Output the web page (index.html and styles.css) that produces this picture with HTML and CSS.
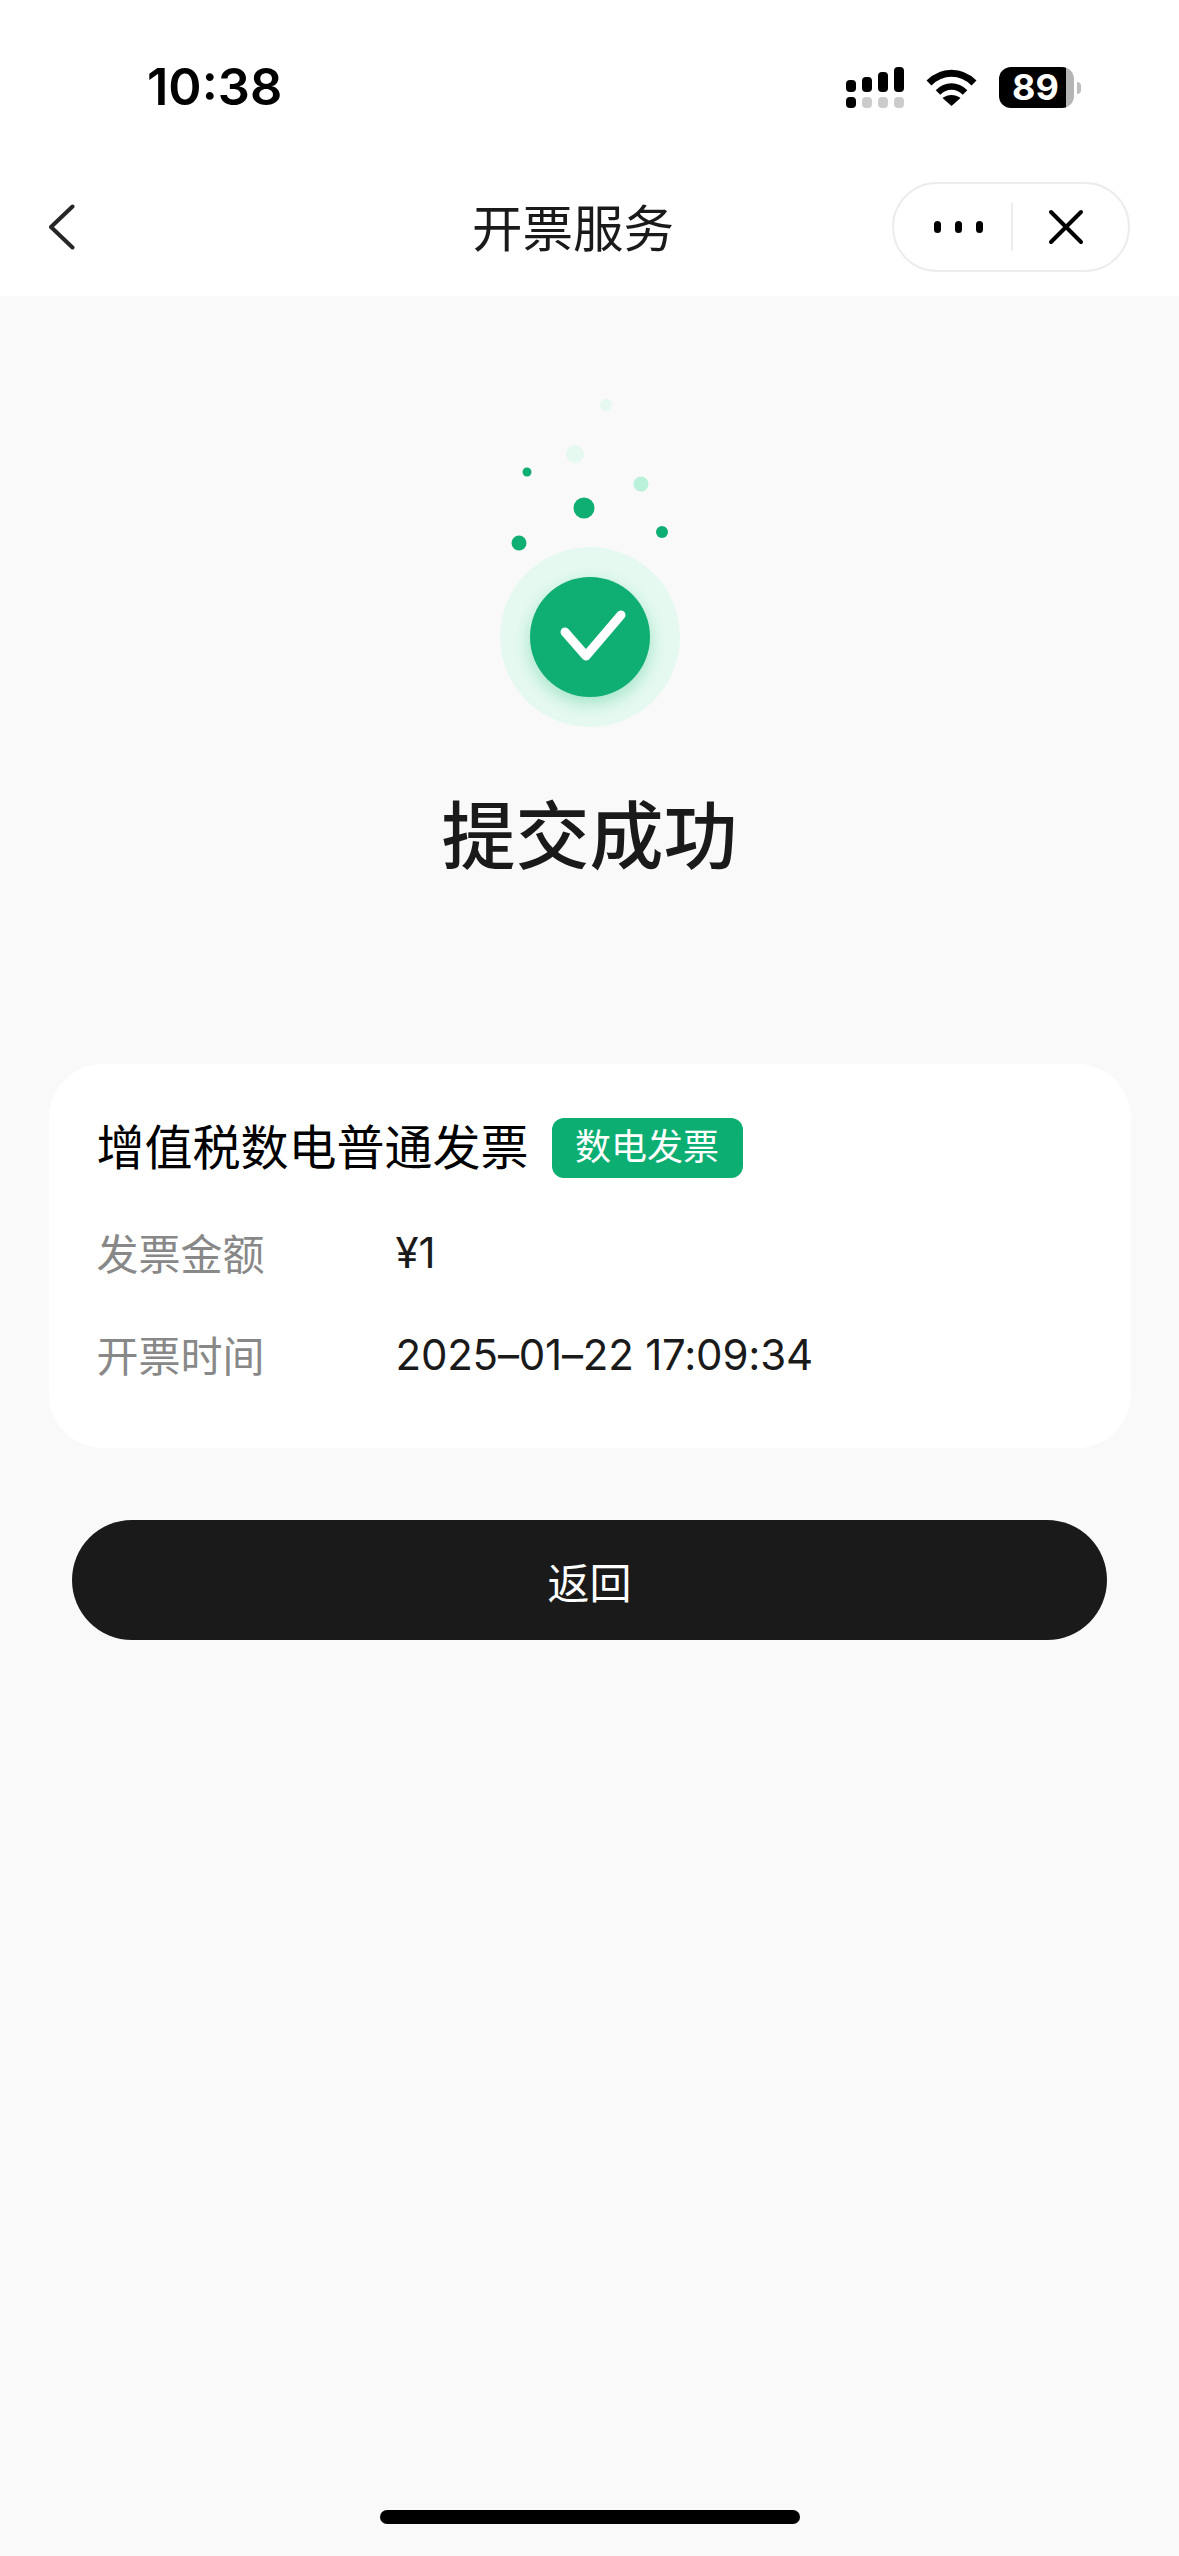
FILE: index.html
```html
<!DOCTYPE html>
<html lang="zh-CN">
<head>
    <meta charset="UTF-8">
    <meta name="viewport" content="width=device-width, initial-scale=1.0">
    <title>开票服务</title>
    <link rel="stylesheet" href="styles.css">
</head>
<body>
    <header class="top">
        <div class="status">
            <span class="time">10:38</span>
            <div class="status_icons">
                <svg class="signal" width="58" height="42" viewBox="0 0 58 42">
                    <rect x="0" y="13" width="10" height="12" rx="4"/>
                    <rect x="16" y="10" width="10" height="15" rx="4"/>
                    <rect x="32" y="5" width="10" height="20" rx="4"/>
                    <rect x="48" y="0" width="10" height="25" rx="4"/>
                    <rect x="0" y="30" width="10" height="11" rx="4"/>
                    <rect x="16" y="30" width="10" height="11" rx="4" fill="#ccc"/>
                    <rect x="32" y="30" width="10" height="11" rx="4" fill="#ccc"/>
                    <rect x="48" y="30" width="10" height="11" rx="4" fill="#ccc"/>
                </svg>
                <svg class="wifi" width="51" height="37" viewBox="0 0 51 37">
                    <path d="M3 14C16 1 35 1 48 14" fill="none" stroke="#000" stroke-width="7"/>
                    <path d="M12 23.500C20 15.500 31 15.500 39 23.500" fill="none" stroke="#000" stroke-width="6.500"/>
                    <path d="M25.500 37L16.500 29C22 25 29 25 34.500 29Z"/>
                </svg>
                <div class="battery">
                    <span class="battery_body">89</span>
                    <span class="battery_nub"></span>
                </div>
            </div>
        </div>
        <nav class="nav">
            <svg class="back" width="26" height="46" viewBox="0 0 26 46">
                <path d="M23.500 2.500L2 23L23.500 43.500" fill="none" stroke="#262626" stroke-width="4" stroke-linecap="round" stroke-linejoin="round"/>
            </svg>
            <div class="nav_title">开票服务</div>
            <div class="capsule">
                <div class="dots"><i></i><i></i><i></i></div>
                <span class="capsule_line"></span>
                <svg class="close" width="36" height="36" viewBox="0 0 36 36">
                    <path d="M3 3L33 33M33 3L3 33" fill="none" stroke="#000" stroke-width="4" stroke-linecap="round"/>
                </svg>
            </div>
        </nav>
    </header>

    <main class="page">
        <section class="result">
            <svg class="result_icon" width="240" height="360" viewBox="0 0 240 360">
                <defs>
                    <filter id="soft" x="-30%" y="-30%" width="160%" height="160%">
                        <feGaussianBlur stdDeviation="9"/>
                    </filter>
                </defs>
                <circle cx="136" cy="35" r="6" fill="#e6f9f1"/>
                <circle cx="105" cy="84" r="9" fill="#e6f9f1"/>
                <circle cx="57" cy="102" r="4.500" fill="#0fae72"/>
                <circle cx="171" cy="114" r="7.500" fill="#b9f1da"/>
                <circle cx="114" cy="138" r="10.500" fill="#0fae72"/>
                <circle cx="49" cy="173" r="7.500" fill="#0fae72"/>
                <circle cx="192" cy="162" r="6" fill="#0fae72"/>
                <circle cx="120" cy="267" r="90" fill="#e6f9f1"/>
                <circle cx="120" cy="273" r="60" fill="#9fe3c6" filter="url(#soft)"/>
                <circle cx="120" cy="267" r="60" fill="#0fae72"/>
                <path d="M95 262L116 286L151 245" fill="none" stroke="#fff" stroke-width="9" stroke-linecap="round" stroke-linejoin="round"/>
            </svg>
            <h1 class="result_title">提交成功</h1>
        </section>

        <section class="card">
            <div class="card_head">
                <span class="card_name">增值税数电普通发票</span>
                <span class="tag">数电发票</span>
            </div>
            <div class="row">
                <span class="row_label">发票金额</span>
                <span class="row_value">¥1</span>
            </div>
            <div class="row">
                <span class="row_label">开票时间</span>
                <span class="row_value">2025–01–22 17:09:34</span>
            </div>
        </section>

        <button class="back_btn">返回</button>

        <div class="home_bar"></div>
    </main>
</body>
</html>
```

FILE: styles.css
```css
* {
    box-sizing: border-box;
}

html, body {
    margin: 0;
    height: 100%;
}

body {
    width: 1179px;
    height: 2556px;
    display: flex;
    flex-direction: column;
    background-color: #f9f9f9;
    color: #1a1a1a;
    font-family: Inter, "Noto Sans CJK SC", sans-serif;
    overflow: hidden;
}

.top {
    height: 296px;
    background-color: #fff;
}

.status {
    height: 150px;
    display: flex;
    justify-content: space-between;
    padding: 67px 98px 0 147px;
}

.time {
    font-size: 50.500px;
    line-height: 40px;
    font-weight: 600;
    color: #000;
}

.status_icons {
    display: flex;
    align-items: flex-start;
}

.wifi {
    margin: 2px 0 0 22px;
}

.battery {
    display: flex;
    align-items: center;
    margin-left: 22px;
}

.battery_body {
    width: 75px;
    height: 41px;
    border-radius: 12px;
    background: linear-gradient(to right, #000 67px, #b5b5b5 67px);
    color: #fff;
    font-size: 36px;
    line-height: 41px;
    font-weight: 700;
    padding-left: 13px;
}

.battery_nub {
    width: 4px;
    height: 12px;
    margin-left: 3px;
    border-radius: 0 6px 6px 0;
    background-color: #bdbdbd;
}

.nav {
    height: 146px;
    display: flex;
    align-items: center;
    padding: 7px 49px 0 49px;
}

.nav_title {
    flex: 1;
    padding: 5px 0 0 179px;
    text-align: center;
    font-size: 50.500px;
    line-height: 60px;
    color: #1a1a1a;
}

.capsule {
    width: 238px;
    height: 90px;
    display: flex;
    align-items: center;
    border: 2px solid #ececec;
    border-radius: 45px;
    background-color: #fff;
}

.dots {
    display: flex;
    gap: 14px;
    margin-left: 40px;
}

.dots i {
    width: 7px;
    height: 12px;
    border-radius: 4px;
    background-color: #000;
}

.capsule_line {
    width: 2px;
    height: 48px;
    margin-left: 28px;
    background-color: #ececec;
}

.close {
    margin-left: 35px;
}

.page {
    flex: 1;
    display: flex;
    flex-direction: column;
    align-items: center;
}

.result {
    display: flex;
    flex-direction: column;
    align-items: center;
    padding-top: 74px;
}

.result_icon {
    display: block;
}

.result_title {
    margin: 56px 0 0;
    font-size: 74px;
    line-height: 100px;
    font-weight: 500;
    color: #1a1a1a;
}

.card {
    width: 1082px;
    height: 384px;
    margin-top: 178px;
    padding: 54px 48px 0;
    border-radius: 54px;
    background-color: #fff;
}

.card_head {
    display: flex;
    align-items: center;
    height: 60px;
}

.card_name {
    font-size: 48px;
    line-height: 60px;
    color: #000;
}

.tag {
    width: 191px;
    height: 60px;
    margin-left: 23px;
    border-radius: 12px;
    background-color: #0cae72;
    color: #fff;
    font-size: 36px;
    line-height: 58px;
    text-align: center;
}

.row {
    display: flex;
    align-items: center;
    height: 60px;
    margin-top: 42px;
    font-size: 42px;
}

.card_head + .row {
    margin-top: 44px;
}

.row_label {
    width: 299px;
    margin-top: -2px;
    color: #888;
}

.row_value {
    color: #1a1a1a;
    letter-spacing: -0.200px;
}

.back_btn {
    width: 1035px;
    height: 120px;
    margin-top: 72px;
    border: none;
    border-radius: 60px;
    background-color: #1a1a1a;
    color: #fff;
    font-family: inherit;
    font-size: 42px;
}

.home_bar {
    width: 420px;
    height: 14px;
    margin-top: auto;
    margin-bottom: 32px;
    border-radius: 7px;
    background-color: #000;
}
```
